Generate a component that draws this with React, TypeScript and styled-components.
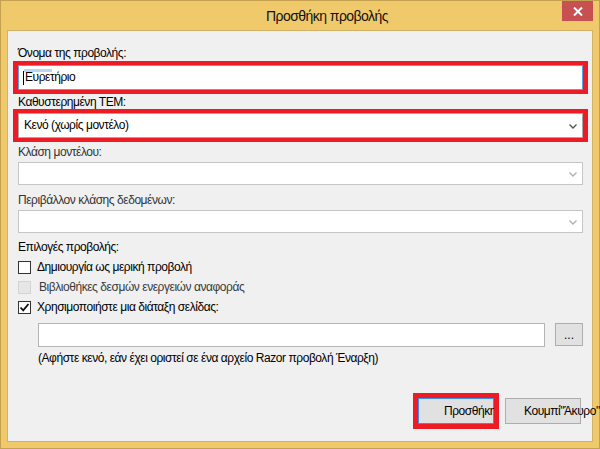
import React from "react";
import styled, { createGlobalStyle } from "styled-components";

const Global = createGlobalStyle`
  html, body { margin: 0; padding: 0; background: #f0c96a; overflow: hidden; }
  body {
    font-family: "Liberation Sans", Arial, sans-serif;
    font-size: 12px;
    letter-spacing: -0.45px;
    color: #000;
  }
  * { box-sizing: border-box; }
`;

const Window = styled.div`
  width: 600px;
  height: 449px;
  border: 1px solid #c4a151;
  background: #f0c96a;
  display: flex;
  flex-direction: column;
  padding: 0 6px 6px 6px;
`;

const TitleBar = styled.div`
  height: 29px;
  display: flex;
  align-items: flex-start;
`;

const Title = styled.div`
  flex: 1;
  text-align: center;
  padding-left: 85px;
  font-size: 14px;
  letter-spacing: -0.55px;
  line-height: 30px;
  color: #111;
`;

const CloseButton = styled.div`
  width: 31px;
  height: 20px;
  background: #c75050;
  display: flex;
  align-items: center;
  justify-content: center;
`;

const Client = styled.div`
  flex: 1;
  min-height: 0;
  background: #f0f0f0;
  border: 1px solid #d2b266;
  display: flex;
  flex-direction: column;
  padding: 15px 9px 17px 10px;
`;

const Label = styled.div<{ $mt?: number; $muted?: boolean }>`
  line-height: 15px;
  margin-top: ${(p) => p.$mt ?? 0}px;
  color: ${(p) => (p.$muted ? "#333" : "#000")};
  white-space: nowrap;
`;

const Highlight = styled.div<{ $v: number; $h: number }>`
  position: relative;
  &::after {
    content: "";
    position: absolute;
    top: -${(p) => p.$v}px;
    bottom: -${(p) => p.$v}px;
    left: -${(p) => p.$h}px;
    right: -${(p) => p.$h}px;
    border-style: solid;
    border-color: #ed1c24;
    border-width: ${(p) => p.$v}px ${(p) => p.$h}px;
    pointer-events: none;
  }
`;

const Field = styled.div<{ $h: number; $mt?: number; $border: string; $flex?: boolean }>`
  position: relative;
  height: ${(p) => p.$h}px;
  margin-top: ${(p) => p.$mt ?? 0}px;
  border: 1px solid ${(p) => p.$border};
  background: #fff;
  display: flex;
  align-items: center;
  padding-left: 4px;
  ${(p) => (p.$flex ? "flex: 1;" : "")}
`;

const FieldText = styled.span`
  line-height: 15px;
  white-space: nowrap;
`;

const Caret = styled.span`
  display: inline-block;
  width: 1px;
  height: 14px;
  background: #000;
  margin-right: 1px;
`;

const SelectionTrace = styled.span`
  position: absolute;
  left: 5px;
  top: 3px;
  width: 28px;
  height: 3px;
  background: #b9d5f5;
`;

const Chevron = styled.svg`
  position: absolute;
  right: 5px;
  top: 50%;
  margin-top: -2px;
`;

const CheckRow = styled.div<{ $mt?: number }>`
  display: flex;
  align-items: center;
  height: 20px;
  gap: 6px;
  margin-top: ${(p) => p.$mt ?? 0}px;
  white-space: nowrap;
`;

const CheckBox = styled.span<{ $disabled?: boolean }>`
  width: 13px;
  height: 13px;
  flex: none;
  border: 1px solid ${(p) => (p.$disabled ? "#d4d4d4" : "#333")};
  background: ${(p) => (p.$disabled ? "#e6e6e6" : "#fff")};
  display: flex;
  align-items: center;
  justify-content: center;
`;

const CheckText = styled.span<{ $disabled?: boolean }>`
  line-height: 20px;
  color: ${(p) => (p.$disabled ? "#3a3a3a" : "#000")};
  margin-left: ${(p) => (p.$disabled ? 2 : 0)}px;
`;

const PathRow = styled.div`
  display: flex;
  align-items: flex-start;
  gap: 10px;
  margin-top: 6px;
  margin-left: 20px;
`;

const BrowseButton = styled.div`
  width: 28px;
  height: 23px;
  border: 1px solid #adadad;
  background: #e1e1e1;
  display: flex;
  align-items: center;
  justify-content: center;
  line-height: 12px;
  letter-spacing: 0;
`;

const Hint = styled.div`
  margin-top: 4px;
  margin-left: 20px;
  line-height: 15px;
  white-space: nowrap;
`;

const Spacer = styled.div`
  flex: 1;
`;

const ButtonRow = styled.div`
  display: flex;
  justify-content: flex-end;
  gap: 11px;
  margin-right: 2px;
`;

const DialogButton = styled.div<{ $pad: number; $focus?: boolean }>`
  width: 76px;
  height: 26px;
  border: 1px solid ${(p) => (p.$focus ? "#3c8ee6" : "#adadad")};
  background: #e1e1e1;
  display: flex;
  align-items: center;
  padding-left: ${(p) => p.$pad}px;
  white-space: nowrap;
  overflow: visible;
  line-height: 15px;
`;

const ChevronIcon = ({ color }: { color: string }) => (
  <Chevron width="8" height="5" viewBox="0 0 8 5">
    <path d="M0.5 0.5 L4 4 L7.5 0.5" fill="none" stroke={color} strokeWidth="1.4" />
  </Chevron>
);

export default function App() {
  return (
    <>
      <Global />
      <Window>
        <TitleBar>
          <Title>Προσθήκη προβολής</Title>
          <CloseButton>
            <svg width="10" height="9" viewBox="0 0 10 9">
              <path d="M1 0.5 L9 8.5 M9 0.5 L1 8.5" stroke="#fff" strokeWidth="2" />
            </svg>
          </CloseButton>
        </TitleBar>
        <Client>
          <Label>Όνομα της προβολής:</Label>
          <Highlight $v={4} $h={5} style={{ marginTop: 4 }}>
            <Field $h={25} $border="#5ea0e6">
              <SelectionTrace />
              <Caret />
              <FieldText>Ευρετήριο</FieldText>
            </Field>
          </Highlight>

          <Label $mt={5}>Καθυστερημένη ΤΕΜ:</Label>
          <Highlight $v={4} $h={5} style={{ marginTop: 3 }}>
            <Field $h={25} $border="#a8a8a8">
              <FieldText style={{ paddingLeft: 1 }}>Κενό (χωρίς μοντέλο)</FieldText>
              <ChevronIcon color="#555" />
            </Field>
          </Highlight>

          <Label $mt={7} $muted>Κλάση μοντέλου:</Label>
          <Field $h={23} $mt={2} $border="#c6c6c6">
            <ChevronIcon color="#b0b0b0" />
          </Field>

          <Label $mt={8} $muted>Περιβάλλον κλάσης δεδομένων:</Label>
          <Field $h={23} $mt={2} $border="#c6c6c6">
            <ChevronIcon color="#b0b0b0" />
          </Field>

          <Label $mt={7}>Επιλογές προβολής:</Label>
          <CheckRow $mt={2}>
            <CheckBox />
            <CheckText>Δημιουργία ως μερική προβολή</CheckText>
          </CheckRow>
          <CheckRow>
            <CheckBox $disabled />
            <CheckText $disabled>Βιβλιοθήκες δεσμών ενεργειών αναφοράς</CheckText>
          </CheckRow>
          <CheckRow>
            <CheckBox>
              <svg width="11" height="11" viewBox="0 0 11 11">
                <path d="M1.5 5.5 L4.2 8.3 L9.5 2" fill="none" stroke="#111" strokeWidth="1.8" />
              </svg>
            </CheckBox>
            <CheckText>Χρησιμοποιήστε μια διάταξη σελίδας:</CheckText>
          </CheckRow>

          <PathRow>
            <Field $h={24} $border="#b4b4b4" $flex />
            <BrowseButton>...</BrowseButton>
          </PathRow>
          <Hint>(Αφήστε κενό, εάν έχει οριστεί σε ένα αρχείο Razor προβολή Έναρξη)</Hint>

          <Spacer />
          <ButtonRow>
            <Highlight $v={5} $h={5}>
              <DialogButton $pad={25} $focus>Προσθήκη</DialogButton>
            </Highlight>
            <DialogButton $pad={18}>Κουμπί"Άκυρο"</DialogButton>
          </ButtonRow>
        </Client>
      </Window>
    </>
  );
}
